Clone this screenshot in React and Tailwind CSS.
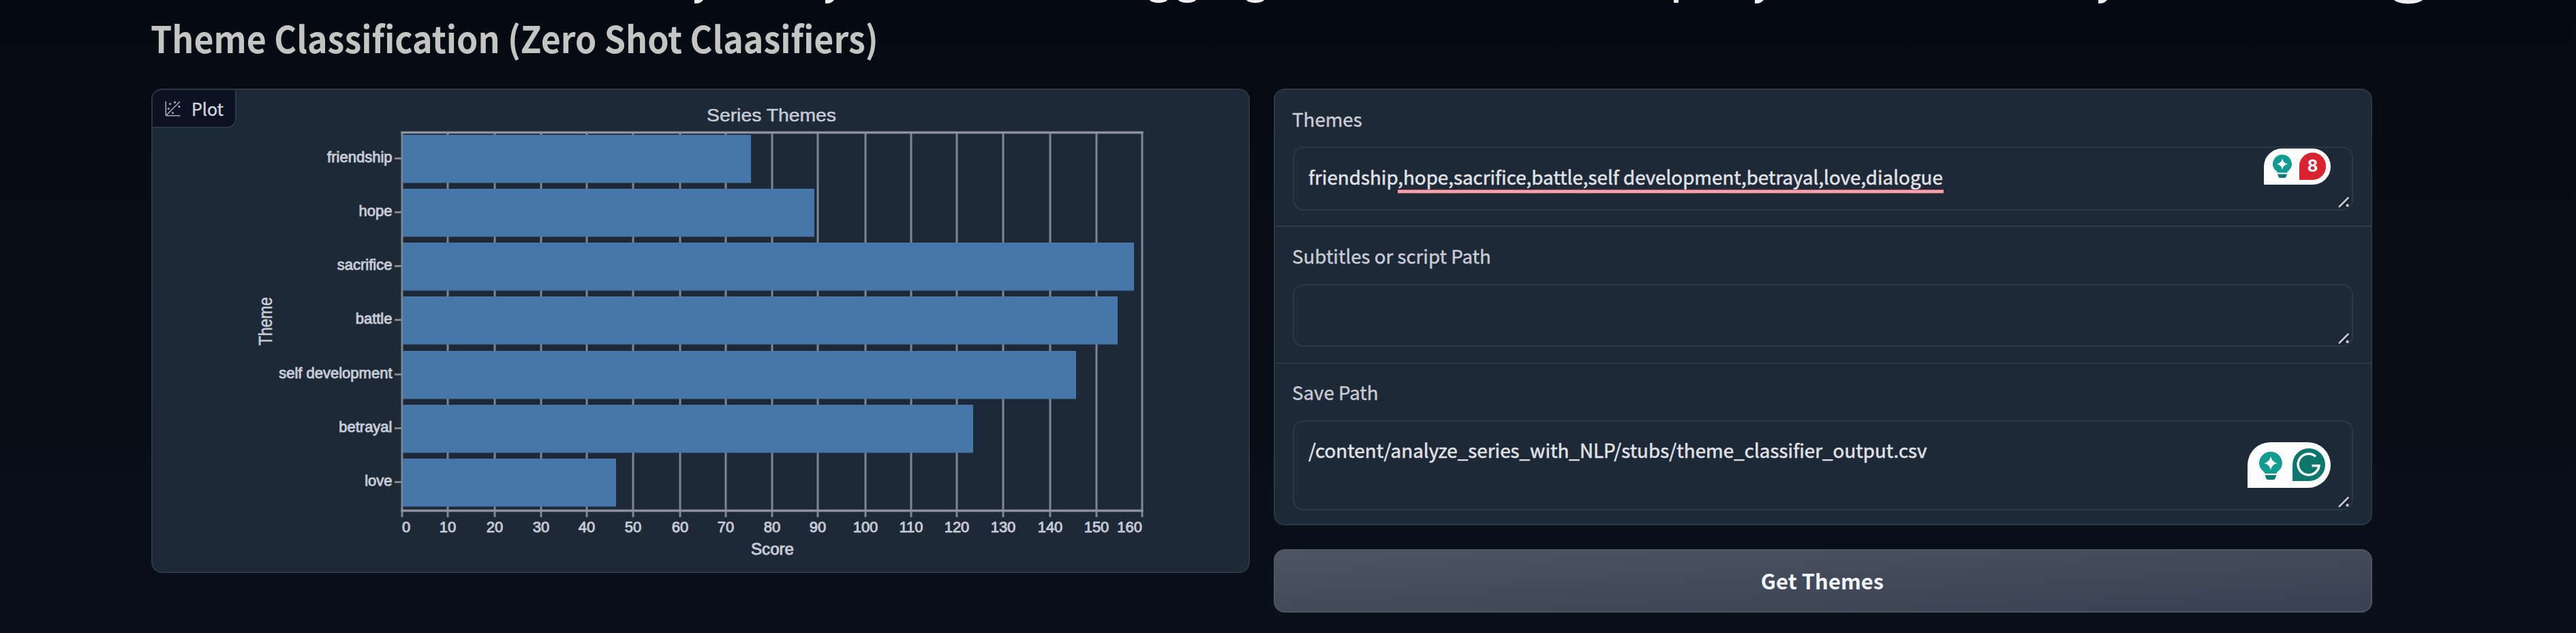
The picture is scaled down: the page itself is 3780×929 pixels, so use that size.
import React from "react";

const BARS = [
  ["friendship", 198, 1102],
  ["hope", 277, 1195],
  ["sacrifice", 356, 1664],
  ["battle", 435, 1640],
  ["self development", 515, 1579],
  ["betrayal", 594, 1428],
  ["love", 673, 904],
];
const TICKS = [590, 657, 726, 794, 861, 929, 998, 1065, 1133, 1200, 1270, 1337, 1404, 1472, 1541, 1609, 1676];

function Chart() {
  return (
    <svg viewBox="224 132 1608 707" className="block h-full w-full" fontFamily="Liberation Sans, sans-serif" fill="#c6cbd6">
      <g stroke="#7f8690" strokeWidth="3">
        {TICKS.map((x) => <line key={x} x1={x} x2={x} y1="193" y2="759" />)}
        {BARS.map(([n, y]) => <line key={n} x1="579" x2="590" y1={y + 34.5} y2={y + 34.5} />)}
      </g>
      <path d="M588.5 194.5H1677.5M588.5 749.5H1677.5" stroke="#8d939e" strokeWidth="3.5" />
      {BARS.map(([n, y, r]) => <rect key={n} x="591" y={y} width={r - 591} height="70.5" fill="#4776aa" />)}
      <g fontSize="22" stroke="#c6cbd6" strokeWidth="0.9">
        {BARS.map(([n, y]) => <text key={n} x="575.5" y={y + 40} textAnchor="end">{n}</text>)}
        {TICKS.map((x, i) => (
          <text key={x} x={i === 0 ? 590 : x} y="781" textAnchor={i === 0 ? "start" : i === 16 ? "end" : "middle"}>{i * 10}</text>
        ))}
        <text x="1102" y="814" textLength="63" lengthAdjust="spacingAndGlyphs" fontSize="23">Score</text>
        <text x="1037" y="178" textLength="190" lengthAdjust="spacingAndGlyphs" fontSize="26.5" strokeWidth="0.5">Series Themes</text>
        <text transform="translate(399 507) rotate(-90) scale(1 1.2)" textLength="71" lengthAdjust="spacingAndGlyphs" fontSize="23" strokeWidth="0.5">Theme</text>
      </g>
    </svg>
  );
}

function PlotIcon() {
  return (
    <svg viewBox="0 0 32 32" className="h-[25px] w-[25px]" fill="#a3a8b6">
      <circle cx="20" cy="4" r="2" /><circle cx="8" cy="16" r="2" /><circle cx="28" cy="12" r="2" />
      <circle cx="11" cy="7" r="2" /><circle cx="16" cy="24" r="2" />
      <path d="M30 3.4 28.6 2 4 26.6V2H2v26a2 2 0 0 0 2 2h26v-2H5.4Z" />
    </svg>
  );
}

function Bulb({ className }) {
  return (
    <svg viewBox="0 0 28 34" className={className}>
      <path d="M14 0C6.300 0 0 6.200 0 13.800c0 4.600 2.400 8 6 10.700l1 2h14l1-2c3.600-2.700 6-6.100 6-10.700C28 6.200 21.700 0 14 0Z" fill="#109c91" />
      <path d="M14 5.500q1.500 7 8 8.300-6.500 1.400-8 8.200-1.500-6.800-8-8.200 6.500-1.300 8-8.300Z" fill="#fff" />
      <path d="M7 28.500h14l-1.500 4q-.5 1.500-2 1.500h-7q-1.500 0-2-1.500Z" fill="#0b7a70" />
    </svg>
  );
}

function Field({ label, labelClass, boxClass, children }) {
  return (
    <>
      <div className={"whitespace-nowrap text-[27.7px] leading-[40px] text-[#c9ccd4] [-webkit-text-stroke:0.4px_#c9ccd4] " + labelClass}><span>{label}</span></div>
      <div className={"relative rounded-[16px] border-2 border-[#2b3847] bg-[#1e2938] pl-[21px] " + boxClass}>
        {children}
        <svg viewBox="0 0 18 18" className="absolute bottom-[1px] right-[2px] h-[18px] w-[18px]">
          <path d="M2 15.500 15 2.500M11.500 15.500 14.500 12.500" stroke="#0b1220" strokeWidth="5.500" />
          <path d="M2 15 14.500 2.500" stroke="#c3c6cc" strokeWidth="3" strokeLinecap="round" />
          <circle cx="13.500" cy="13.500" r="2.200" fill="#c3c6cc" />
        </svg>
      </div>
    </>
  );
}

export default function App() {
  return (
    <div className="relative flex h-[929px] w-[3780px] flex-col overflow-hidden bg-linear-to-b from-[#060a12] to-[#09101b] pl-[222px] font-['Noto_Sans_CJK_SC',sans-serif]">
      <svg viewBox="0 0 3780 8" className="absolute left-0 top-0 h-[8px] w-[3780px]" fill="#efefef">
        {[1019, 1211, 2575, 3079].map((x) => (
          <path key={x} transform={`translate(${x} 0)`} d="M0 0H13Q9 5 3 5H0Z" />
        ))}
        {[1700, 1742, 1842].map((x) => <ellipse key={x} cx={x} cy="-1.500" rx="13.500" ry="5.700" />)}
        <rect x="2456" y="0" width="7" height="4" />
        <ellipse cx="3534" cy="-5" rx="24" ry="10.500" />
      </svg>
      <h1 className="-ml-px mt-[15px] h-[80px] whitespace-nowrap text-[54px] font-bold leading-[80px] text-[#c4c4c2]">
        <span className="inline-block origin-left scale-x-[0.928]">Theme Classification (Zero Shot Claasifiers)</span>
      </h1>
      <div className="mt-[35px] flex gap-[35px]">
        <section className="relative h-[711px] w-[1612px] overflow-hidden rounded-[16px] border-2 border-[#2c3745] bg-[#1e2938]">
          <Chart />
          <div className="absolute left-0 top-0 flex h-[56px] w-[123px] items-center gap-[15px] rounded-br-[14px] border-b-2 border-r-2 border-[#2c3745] bg-[#0c1222] pl-[17px] text-[#d3d5da]">
            <PlotIcon />
            <span className="text-[25px] leading-none [-webkit-text-stroke:0.4px_#d3d5da]">Plot</span>
          </div>
        </section>
        <div className="flex w-[1612px] flex-col gap-[35px]">
          <section className="flex h-[641px] flex-col rounded-[16px] border-2 border-[#2c3745] bg-[#1e2938]">
            <div className="h-[201px] border-b-2 border-[#303b4b] px-[26px]">
              <Field label="Themes" labelClass="-ml-px mt-[22px]" boxClass="mt-[21px] h-[94px]">
                <div className="whitespace-nowrap pt-[22px] text-[27.75px] leading-[40px] text-[#e0e2e6] [-webkit-text-stroke:0.5px_#e0e2e6]">
                  <span>friendship,hope,sacrifice,battle,self development,betrayal,love,dialogue</span>
                </div>
                <div className="absolute left-[152px] top-[61px] h-[6px] w-[801px] border-y border-[#a55460] bg-[#f3a3ae]" />
                <div className="absolute right-[31px] top-[1px] h-[53px] w-[98px] rounded-[27px] rounded-bl-none bg-[#fdfdfd]">
                  <Bulb className="absolute left-[13px] top-[9px] h-[34px] w-[28px]" />
                  <div className="absolute left-[52px] top-[6px] flex h-[40px] w-[39px] items-center justify-center rounded-[20px] rounded-bl-none bg-[#d9232e] font-['Inter',sans-serif] text-[24px] font-bold leading-none text-white">8</div>
                </div>
              </Field>
            </div>
            <div className="h-[201px] border-b-2 border-[#2c3745] px-[26px]">
              <Field label="Subtitles or script Path" labelClass="-ml-px mt-[22px]" boxClass="mt-[22px] h-[92px]" />
            </div>
            <div className="px-[26px]">
              <Field label="Save Path" labelClass="-ml-px mt-[21px]" boxClass="mt-[22px] h-[132px]">
                <div className="whitespace-nowrap pt-[21px] text-[27.8px] leading-[40px] text-[#e0e2e6] [-webkit-text-stroke:0.5px_#e0e2e6]">
                  <span>/content/analyze_series_with_NLP/stubs/theme_classifier_output.csv</span>
                </div>
                <div className="absolute right-[31px] top-[30px] h-[67px] w-[122px] rounded-[33.5px] rounded-bl-none bg-[#fdfdff]">
                  <Bulb className="absolute left-[17px] top-[14px] h-[41px] w-[34px]" />
                  <svg viewBox="0 0 48 48" className="absolute left-[66px] top-[9px] h-[48px] w-[48px]">
                    <path d="M0 48V24A24 24 0 1 1 24 48Z" fill="#0d776d" />
                    <path d="M34 12A15.500 15.500 0 1 0 39 25.500H28.500M39 25.500H36" fill="none" stroke="#fff" strokeWidth="3.500" />
                  </svg>
                </div>
              </Field>
            </div>
          </section>
          <button className="h-[93px] rounded-[16px] border-2 border-[#4b5563] bg-linear-to-br from-[#4b5563] to-[#374151] pr-[2px] text-[31px] font-bold text-[#f3f5f8]">
            <span>Get Themes</span>
          </button>
        </div>
      </div>
    </div>
  );
}
